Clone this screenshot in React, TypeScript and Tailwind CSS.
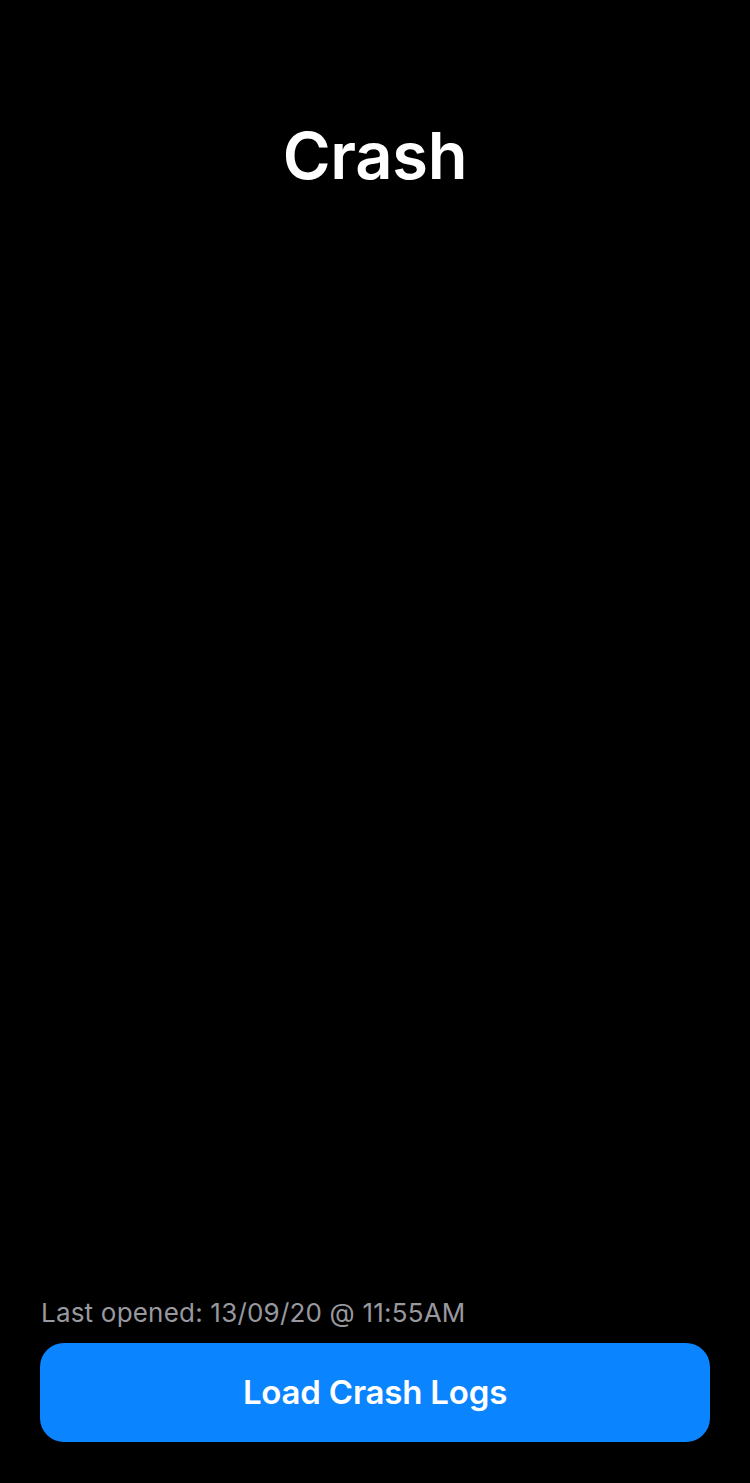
export default function App() {
  return (
    <div
      className="h-[1483px] w-[750px] bg-black flex flex-col px-10 pb-[41px]"
      style={{ fontFamily: "Inter, 'Noto Sans', sans-serif" }}
    >
      <h1 className="pt-[117px] text-center text-[65px] leading-[78px] font-semibold text-white tracking-[-0.3px]">
        Crash
      </h1>
      <div className="flex-1" />
      <p className="pl-[1px] pb-[15px] text-[26px] leading-[30px] text-[#98989f] tracking-[0.2px]">
        Last opened: 13/09/20 @ 11:55AM
      </p>
      <button className="h-[99px] w-full rounded-[24px] bg-[#0a84ff] text-white text-[33px] font-semibold tracking-[-0.2px]">
        Load Crash Logs
      </button>
    </div>
  )
}
